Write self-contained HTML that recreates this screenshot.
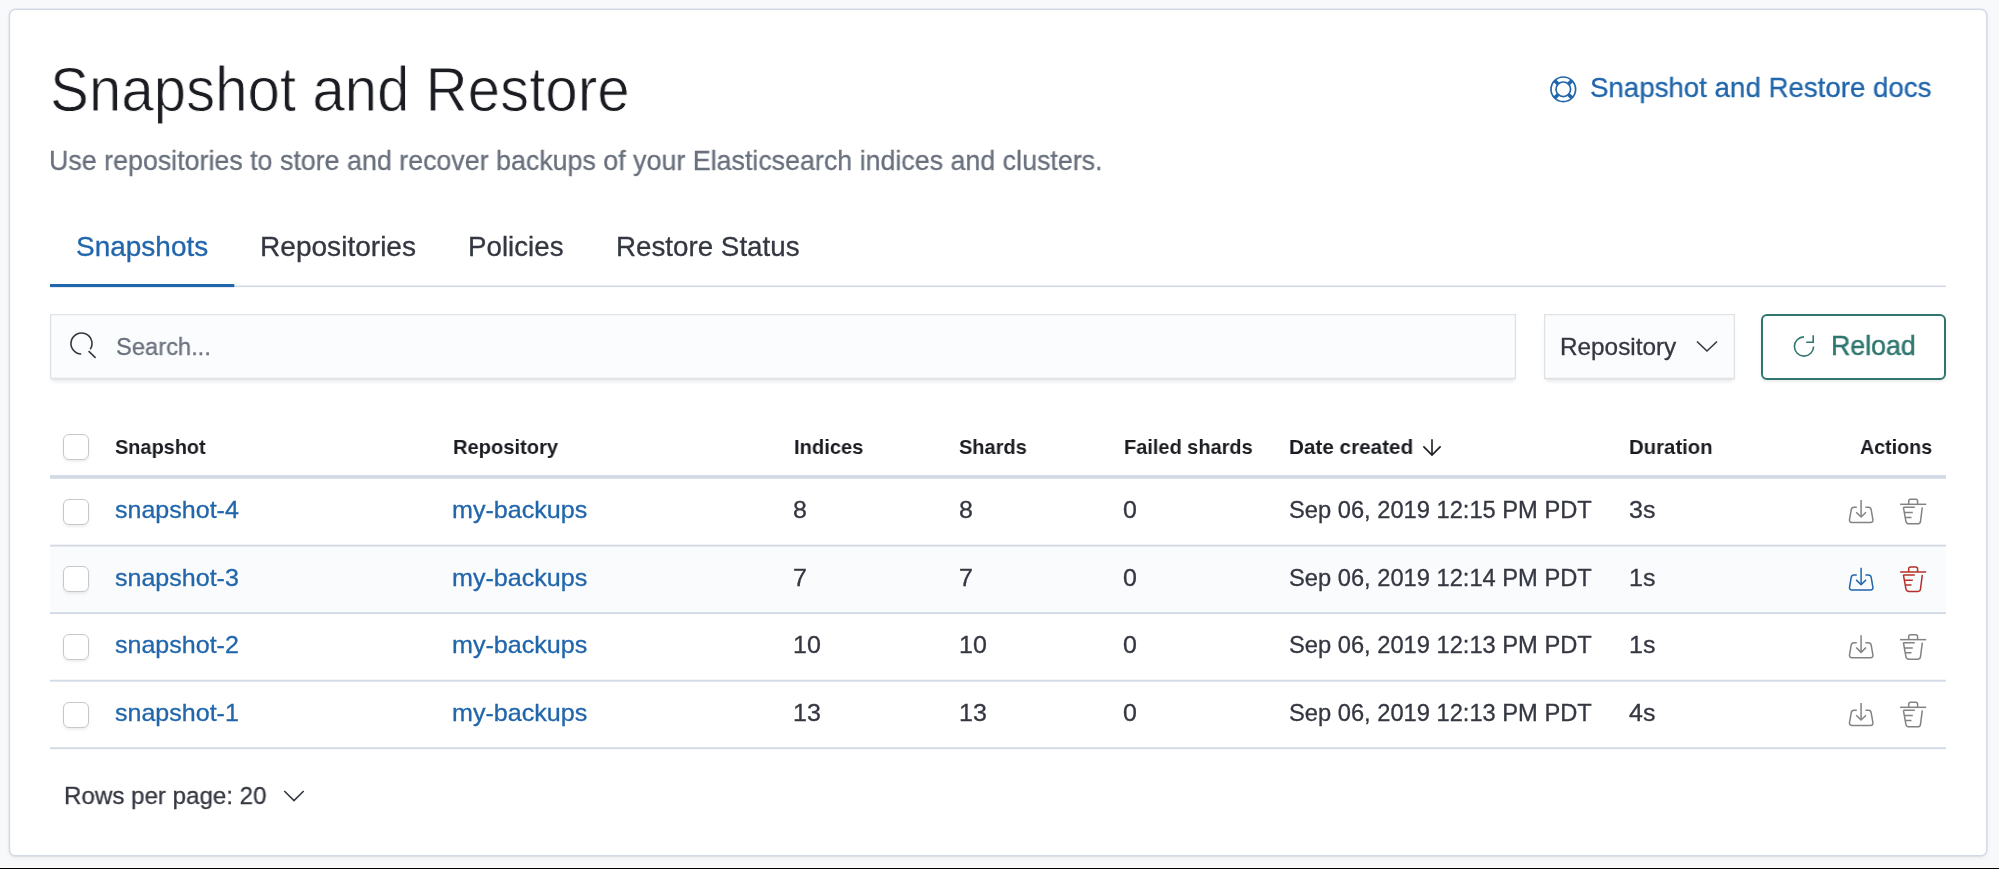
<!DOCTYPE html>
<html><head><meta charset="utf-8"><style>
html,body{margin:0;padding:0;width:1999px;height:869px;overflow:hidden;background:#f8f9fb;font-family:"Liberation Sans",sans-serif}
.t{position:absolute;white-space:nowrap;line-height:normal;transform-origin:0 0;will-change:transform}
</style></head><body>
<div style="position:absolute;left:0;top:867px;width:1999px;height:1px;background:#fdfdfe"></div>
<div style="position:absolute;left:0;top:868px;width:1999px;height:1px;background:#000"></div>
<div style="position:absolute;left:9px;top:9px;width:1978px;height:847px;border-radius:6px;background:#fff;box-shadow:0 2px 5px rgba(0,0,0,.05),0 1px 2px rgba(0,0,0,.05)"></div>
<svg style="position:absolute;left:0;top:0" width="1999" height="869"><rect x="9.4" y="9.2" width="1977.4" height="846.6" rx="6" ry="6" fill="none" stroke="#d3dae6" stroke-width="1.5"/></svg>
<div style="position:absolute;left:50px;top:546px;width:1896px;height:66px;background:#fafbfd"></div><div style="position:absolute;left:50px;top:314px;width:1466px;height:65px;background:#fbfcfd;box-shadow:0 1px 1px -1px rgba(152,162,179,.3),0 4px 4px -2px rgba(152,162,179,.3),inset 0 0 0 1.3px rgba(16,22,26,.11)"></div><div style="position:absolute;left:1544px;top:314px;width:191px;height:65px;background:#fbfcfd;box-shadow:0 1px 1px -1px rgba(152,162,179,.3),0 4px 4px -2px rgba(152,162,179,.3),inset 0 0 0 1.3px rgba(16,22,26,.11)"></div><div style="position:absolute;left:1761px;top:314px;width:185px;height:66px;box-sizing:border-box;border:2px solid #2f776e;border-radius:6px;background:#fff;box-shadow:0 2px 3px rgba(0,0,0,.08)"></div><div style="position:absolute;left:63px;top:434px;width:26px;height:26px;box-sizing:border-box;border:1.7px solid #c6c8cc;border-radius:6px;background:#fff;box-shadow:0 2px 3px rgba(0,0,0,.07)"></div><div style="position:absolute;left:63px;top:498.5px;width:26px;height:26px;box-sizing:border-box;border:1.7px solid #c6c8cc;border-radius:6px;background:#fff;box-shadow:0 2px 3px rgba(0,0,0,.07)"></div><div style="position:absolute;left:63px;top:566.17px;width:26px;height:26px;box-sizing:border-box;border:1.7px solid #c6c8cc;border-radius:6px;background:#fff;box-shadow:0 2px 3px rgba(0,0,0,.07)"></div><div style="position:absolute;left:63px;top:633.84px;width:26px;height:26px;box-sizing:border-box;border:1.7px solid #c6c8cc;border-radius:6px;background:#fff;box-shadow:0 2px 3px rgba(0,0,0,.07)"></div><div style="position:absolute;left:63px;top:701.51px;width:26px;height:26px;box-sizing:border-box;border:1.7px solid #c6c8cc;border-radius:6px;background:#fff;box-shadow:0 2px 3px rgba(0,0,0,.07)"></div>
<div class="t" style="left:50.2px;top:53.0px;font-size:62.5px;color:#1a1c21;transform:scaleX(0.9318);-webkit-text-stroke:0.9px #fff;">Snapshot and Restore</div><div class="t" style="left:49.24px;top:144.8px;font-size:27.4px;color:#69707d;transform:scaleX(0.9788);-webkit-text-stroke:0.3px #69707d;">Use repositories to store and recover backups of your Elasticsearch indices and clusters.</div><div class="t" style="left:1590.41px;top:72.4px;font-size:27.9px;color:#2166ab;transform:scaleX(0.9921);-webkit-text-stroke:0.3px #2166ab;">Snapshot and Restore docs</div><div class="t" style="left:75.89px;top:231.1px;font-size:27.6px;color:#2166ab;transform:scaleX(1.0141);-webkit-text-stroke:0.3px #2166ab;">Snapshots</div><div class="t" style="left:259.97px;top:231.1px;font-size:27.6px;color:#343741;transform:scaleX(1.0173);-webkit-text-stroke:0.3px #343741;">Repositories</div><div class="t" style="left:468.09px;top:231.1px;font-size:27.6px;color:#343741;transform:scaleX(1.0043);-webkit-text-stroke:0.3px #343741;">Policies</div><div class="t" style="left:616.19px;top:231.1px;font-size:27.6px;color:#343741;transform:scaleX(1.0056);-webkit-text-stroke:0.3px #343741;">Restore Status</div><div class="t" style="left:115.51px;top:332.8px;font-size:23.97px;color:#69707d;transform:scaleX(0.9892);-webkit-text-stroke:0.3px #69707d;">Search...</div><div class="t" style="left:1560.46px;top:333.2px;font-size:23.84px;color:#343741;transform:scaleX(1.0205);-webkit-text-stroke:0.3px #343741;">Repository</div><div class="t" style="left:1831.05px;top:329.9px;font-size:27.4px;color:#2f776e;transform:scaleX(0.9771);-webkit-text-stroke:0.5px #2f776e;">Reload</div><div class="t" style="left:115.04px;top:435.2px;font-size:20.8px;font-weight:700;color:#1a1c21;transform:scaleX(0.9574);">Snapshot</div><div class="t" style="left:453.33px;top:435.2px;font-size:20.8px;font-weight:700;color:#1a1c21;transform:scaleX(0.9673);">Repository</div><div class="t" style="left:793.83px;top:435.2px;font-size:20.8px;font-weight:700;color:#1a1c21;transform:scaleX(0.9686);">Indices</div><div class="t" style="left:958.54px;top:435.2px;font-size:20.8px;font-weight:700;color:#1a1c21;transform:scaleX(0.9609);">Shards</div><div class="t" style="left:1123.74px;top:435.2px;font-size:20.8px;font-weight:700;color:#1a1c21;transform:scaleX(0.9598);">Failed shards</div><div class="t" style="left:1288.91px;top:435.2px;font-size:20.8px;font-weight:700;color:#1a1c21;transform:scaleX(0.9943);">Date created</div><div class="t" style="left:1629.02px;top:435.2px;font-size:20.8px;font-weight:700;color:#1a1c21;transform:scaleX(0.9783);">Duration</div><div class="t" style="left:1860.45px;top:435.2px;font-size:20.8px;font-weight:700;color:#1a1c21;transform:scaleX(0.9453);">Actions</div><div class="t" style="left:64.14px;top:782.1px;font-size:24.57px;color:#343741;transform:scaleX(0.9823);-webkit-text-stroke:0.3px #343741;">Rows per page: 20</div><div class="t" style="left:115.44px;top:497.0px;font-size:23.6px;color:#2166ab;transform:scaleX(1.0609);-webkit-text-stroke:0.3px #2166ab;">snapshot-4</div><div class="t" style="left:452.47px;top:497.0px;font-size:23.6px;color:#2166ab;transform:scaleX(1.064);-webkit-text-stroke:0.3px #2166ab;">my-backups</div><div class="t" style="left:793.15px;top:497.0px;font-size:23.6px;color:#343741;transform:scaleX(1.06);-webkit-text-stroke:0.3px #343741;">8</div><div class="t" style="left:958.51px;top:497.0px;font-size:23.6px;color:#343741;transform:scaleX(1.06);-webkit-text-stroke:0.3px #343741;">8</div><div class="t" style="left:1123.45px;top:497.0px;font-size:23.6px;color:#343741;transform:scaleX(1.06);-webkit-text-stroke:0.3px #343741;">0</div><div class="t" style="left:1289.1px;top:497.0px;font-size:23.6px;color:#343741;transform:scaleX(1.0037);-webkit-text-stroke:0.3px #343741;">Sep 06, 2019 12:15 PM PDT</div><div class="t" style="left:1628.54px;top:497.0px;font-size:23.6px;color:#343741;transform:scaleX(1.06);-webkit-text-stroke:0.3px #343741;">3s</div><div class="t" style="left:115.44px;top:564.67px;font-size:23.6px;color:#2166ab;transform:scaleX(1.0609);-webkit-text-stroke:0.3px #2166ab;">snapshot-3</div><div class="t" style="left:452.47px;top:564.67px;font-size:23.6px;color:#2166ab;transform:scaleX(1.064);-webkit-text-stroke:0.3px #2166ab;">my-backups</div><div class="t" style="left:793.15px;top:564.67px;font-size:23.6px;color:#343741;transform:scaleX(1.06);-webkit-text-stroke:0.3px #343741;">7</div><div class="t" style="left:958.51px;top:564.67px;font-size:23.6px;color:#343741;transform:scaleX(1.06);-webkit-text-stroke:0.3px #343741;">7</div><div class="t" style="left:1123.45px;top:564.67px;font-size:23.6px;color:#343741;transform:scaleX(1.06);-webkit-text-stroke:0.3px #343741;">0</div><div class="t" style="left:1289.1px;top:564.67px;font-size:23.6px;color:#343741;transform:scaleX(1.0037);-webkit-text-stroke:0.3px #343741;">Sep 06, 2019 12:14 PM PDT</div><div class="t" style="left:1628.54px;top:564.67px;font-size:23.6px;color:#343741;transform:scaleX(1.06);-webkit-text-stroke:0.3px #343741;">1s</div><div class="t" style="left:115.44px;top:632.34px;font-size:23.6px;color:#2166ab;transform:scaleX(1.0609);-webkit-text-stroke:0.3px #2166ab;">snapshot-2</div><div class="t" style="left:452.47px;top:632.34px;font-size:23.6px;color:#2166ab;transform:scaleX(1.064);-webkit-text-stroke:0.3px #2166ab;">my-backups</div><div class="t" style="left:793.15px;top:632.34px;font-size:23.6px;color:#343741;transform:scaleX(1.06);-webkit-text-stroke:0.3px #343741;">10</div><div class="t" style="left:958.51px;top:632.34px;font-size:23.6px;color:#343741;transform:scaleX(1.06);-webkit-text-stroke:0.3px #343741;">10</div><div class="t" style="left:1123.45px;top:632.34px;font-size:23.6px;color:#343741;transform:scaleX(1.06);-webkit-text-stroke:0.3px #343741;">0</div><div class="t" style="left:1289.1px;top:632.34px;font-size:23.6px;color:#343741;transform:scaleX(1.0037);-webkit-text-stroke:0.3px #343741;">Sep 06, 2019 12:13 PM PDT</div><div class="t" style="left:1628.54px;top:632.34px;font-size:23.6px;color:#343741;transform:scaleX(1.06);-webkit-text-stroke:0.3px #343741;">1s</div><div class="t" style="left:115.44px;top:700.01px;font-size:23.6px;color:#2166ab;transform:scaleX(1.0609);-webkit-text-stroke:0.3px #2166ab;">snapshot-1</div><div class="t" style="left:452.47px;top:700.01px;font-size:23.6px;color:#2166ab;transform:scaleX(1.064);-webkit-text-stroke:0.3px #2166ab;">my-backups</div><div class="t" style="left:793.15px;top:700.01px;font-size:23.6px;color:#343741;transform:scaleX(1.06);-webkit-text-stroke:0.3px #343741;">13</div><div class="t" style="left:958.51px;top:700.01px;font-size:23.6px;color:#343741;transform:scaleX(1.06);-webkit-text-stroke:0.3px #343741;">13</div><div class="t" style="left:1123.45px;top:700.01px;font-size:23.6px;color:#343741;transform:scaleX(1.06);-webkit-text-stroke:0.3px #343741;">0</div><div class="t" style="left:1289.1px;top:700.01px;font-size:23.6px;color:#343741;transform:scaleX(1.0037);-webkit-text-stroke:0.3px #343741;">Sep 06, 2019 12:13 PM PDT</div><div class="t" style="left:1628.54px;top:700.01px;font-size:23.6px;color:#343741;transform:scaleX(1.06);-webkit-text-stroke:0.3px #343741;">4s</div>
<svg style="position:absolute;left:0;top:0" width="1999" height="869" viewBox="0 0 1999 869"><rect x="50" y="285.5" width="1896" height="1.6" fill="#d3dae6"/><rect x="50" y="284" width="184.3" height="3.1" fill="#2166ab"/><rect x="50" y="475.1" width="1896" height="3.7" fill="#d3dae6"/><rect x="50" y="544.65" width="1896" height="1.9" fill="#d3dae6"/><rect x="50" y="612.15" width="1896" height="1.9" fill="#d3dae6"/><rect x="50" y="679.75" width="1896" height="1.9" fill="#d3dae6"/><rect x="50" y="747.25" width="1896" height="1.9" fill="#d3dae6"/><g fill="none" stroke="#838383" stroke-width="1.5" stroke-linecap="butt" stroke-linejoin="round" transform="translate(0,0.0)"><path d="M1861.1,500 V516.5"/><path d="M1856.2,512.2 L1861.1,517 L1866,512.2"/><path d="M1856.8,507.3 H1854 Q1851.6,507.3 1851.2,509.8 L1849.5,519.6 Q1849.2,522.4 1852,522.4 H1870.4 Q1873.3,522.4 1872.9,519.6 L1871.2,509.8 Q1870.8,507.3 1868.4,507.3 H1865.4"/></g><g fill="none" stroke="#838383" stroke-width="1.5" stroke-linejoin="round" transform="translate(0,0.0)"><path d="M1900.1,504.3 H1926.2"/><path d="M1908.7,504.3 V501.2 Q1908.7,499.3 1910.6,499.3 H1915.7 Q1917.6,499.3 1917.6,501.2 V504.3"/><path d="M1903.4,507.3 L1905.9,521.3 Q1906.4,523.8 1909,523.8 H1917.6 Q1920.2,523.8 1920.5,521.3 L1922.3,507.3"/><path d="M1903.4,507.3 H1914.8 M1904.4,512.6 H1912.8 M1905.3,517.4 H1911.5"/></g><g fill="none" stroke="#2166ab" stroke-width="1.5" stroke-linecap="butt" stroke-linejoin="round" transform="translate(0,67.67)"><path d="M1861.1,500 V516.5"/><path d="M1856.2,512.2 L1861.1,517 L1866,512.2"/><path d="M1856.8,507.3 H1854 Q1851.6,507.3 1851.2,509.8 L1849.5,519.6 Q1849.2,522.4 1852,522.4 H1870.4 Q1873.3,522.4 1872.9,519.6 L1871.2,509.8 Q1870.8,507.3 1868.4,507.3 H1865.4"/></g><g fill="none" stroke="#b5302a" stroke-width="1.5" stroke-linejoin="round" transform="translate(0,67.67)"><path d="M1900.1,504.3 H1926.2"/><path d="M1908.7,504.3 V501.2 Q1908.7,499.3 1910.6,499.3 H1915.7 Q1917.6,499.3 1917.6,501.2 V504.3"/><path d="M1903.4,507.3 L1905.9,521.3 Q1906.4,523.8 1909,523.8 H1917.6 Q1920.2,523.8 1920.5,521.3 L1922.3,507.3"/><path d="M1903.4,507.3 H1914.8 M1904.4,512.6 H1912.8 M1905.3,517.4 H1911.5"/></g><g fill="none" stroke="#838383" stroke-width="1.5" stroke-linecap="butt" stroke-linejoin="round" transform="translate(0,135.34)"><path d="M1861.1,500 V516.5"/><path d="M1856.2,512.2 L1861.1,517 L1866,512.2"/><path d="M1856.8,507.3 H1854 Q1851.6,507.3 1851.2,509.8 L1849.5,519.6 Q1849.2,522.4 1852,522.4 H1870.4 Q1873.3,522.4 1872.9,519.6 L1871.2,509.8 Q1870.8,507.3 1868.4,507.3 H1865.4"/></g><g fill="none" stroke="#838383" stroke-width="1.5" stroke-linejoin="round" transform="translate(0,135.34)"><path d="M1900.1,504.3 H1926.2"/><path d="M1908.7,504.3 V501.2 Q1908.7,499.3 1910.6,499.3 H1915.7 Q1917.6,499.3 1917.6,501.2 V504.3"/><path d="M1903.4,507.3 L1905.9,521.3 Q1906.4,523.8 1909,523.8 H1917.6 Q1920.2,523.8 1920.5,521.3 L1922.3,507.3"/><path d="M1903.4,507.3 H1914.8 M1904.4,512.6 H1912.8 M1905.3,517.4 H1911.5"/></g><g fill="none" stroke="#838383" stroke-width="1.5" stroke-linecap="butt" stroke-linejoin="round" transform="translate(0,203.01)"><path d="M1861.1,500 V516.5"/><path d="M1856.2,512.2 L1861.1,517 L1866,512.2"/><path d="M1856.8,507.3 H1854 Q1851.6,507.3 1851.2,509.8 L1849.5,519.6 Q1849.2,522.4 1852,522.4 H1870.4 Q1873.3,522.4 1872.9,519.6 L1871.2,509.8 Q1870.8,507.3 1868.4,507.3 H1865.4"/></g><g fill="none" stroke="#838383" stroke-width="1.5" stroke-linejoin="round" transform="translate(0,203.01)"><path d="M1900.1,504.3 H1926.2"/><path d="M1908.7,504.3 V501.2 Q1908.7,499.3 1910.6,499.3 H1915.7 Q1917.6,499.3 1917.6,501.2 V504.3"/><path d="M1903.4,507.3 L1905.9,521.3 Q1906.4,523.8 1909,523.8 H1917.6 Q1920.2,523.8 1920.5,521.3 L1922.3,507.3"/><path d="M1903.4,507.3 H1914.8 M1904.4,512.6 H1912.8 M1905.3,517.4 H1911.5"/></g><g fill="none" stroke="#2166ab" stroke-width="1.7"><circle cx="1563.3" cy="89.3" r="12.3"/><circle cx="1563.3" cy="89.3" r="7.3"/></g><g stroke="#2166ab" stroke-width="3.6"><path d="M1554.6,80.6 L1558.1,84.1 M1572,80.6 L1568.5,84.1 M1554.6,98 L1558.1,94.5 M1572,98 L1568.5,94.5"/></g><g fill="none" stroke="#343741" stroke-width="1.6" stroke-linecap="butt"><path d="M81.2,354 A10.5,10.5 0 1 1 90.3,349.2"/><path d="M88.6,351.2 L95.6,357.8"/></g><g fill="none" stroke="#2f776e" stroke-width="1.6"><path d="M1804,336.9 A9.6,9.6 0 1 0 1813.6,346.5"/><path d="M1813.2,335.3 V342.3 H1806.2"/></g><path d="M1697,341.5 L1707,351 L1717,341.5" fill="none" stroke="#343741" stroke-width="1.6"/><path d="M284.3,791 L294,800.6 L303.7,791" fill="none" stroke="#343741" stroke-width="1.6"/><g fill="none" stroke="#1a1c21" stroke-width="1.6"><path d="M1432,439.2 V454.4"/><path d="M1423.4,446.4 L1432,455 L1440.6,446.4"/></g></svg>
</body></html>
